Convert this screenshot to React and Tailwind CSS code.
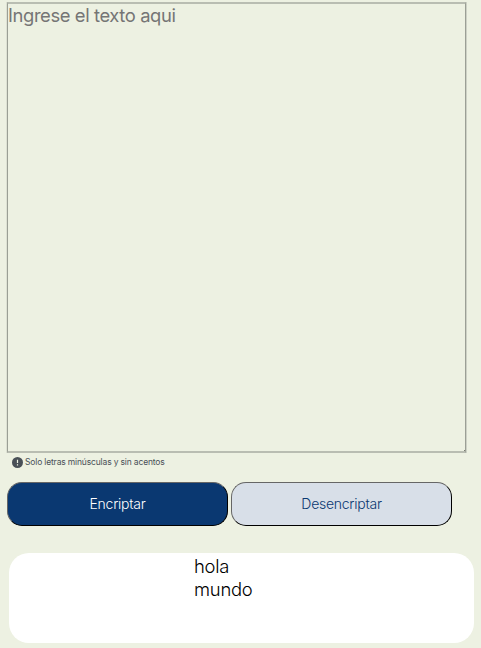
function Hint() {
  return (
    <p className="ml-[11.5px] mt-[3px] flex h-3 items-center gap-[2.5px] text-[8.5px] leading-3 tracking-[-0.16px] text-[#495057]">
      <svg viewBox="0 0 12 12" className="h-[11px] w-[11px] shrink-0">
        <circle cx="6" cy="6" r="6" fill="#495057" />
        <path d="M6 3v3.6M6 8v1.2" stroke="#edf1e2" strokeWidth="1.3" />
      </svg>
      <span>Solo letras minúsculas y sin acentos</span>
    </p>
  );
}

export default function App() {
  return (
    <main className="h-[648px] w-[481px] overflow-hidden bg-[#edf1e2] pt-[2px] font-['Inter','Liberation_Sans',sans-serif]">
      <div className="relative ml-[7px] w-[459px]">
        <textarea
          placeholder="Ingrese el texto aqui"
          className="block h-[451px] w-full resize-none border border-y-2 border-t-[#b9bdb2] border-r-[#9b9f95] border-b-[#b9bdb2] border-l-[#9b9f95] bg-transparent p-0 text-[18.4px] leading-[23px] font-normal tracking-[-0.4px] text-black shadow-[1px_0_0_#cdd1c5,-1px_0_0_#dde1d3] outline-none placeholder:text-[#757575]"
        />
        <span className="absolute right-[1px] bottom-[2px] h-px w-px bg-[#777b72]" />
      </div>
      <Hint />
      <div className="ml-[7px] mt-[14px] flex gap-[3px] text-[14px] leading-5 font-light tracking-[-0.26px]">
        <button className="h-11 w-[221px] rounded-[15px] border-[1.5px] border-t-[#666] border-l-[#666] border-r-black border-b-black bg-[#0a3871] text-white">
          Encriptar
        </button>
        <button className="h-11 w-[221px] rounded-[15px] border-[1.5px] border-t-[#666] border-l-[#666] border-r-black border-b-black bg-[#d8dfe8] text-[#0a3871]">
          Desencriptar
        </button>
      </div>
      <section className="ml-[9px] mt-[27px] h-[90px] w-[464.5px] rounded-[20px] bg-white pl-[185px] pt-[2px] text-[18.4px] leading-[23px] font-[350] tracking-[-0.25px] text-black">
        <p>hola</p>
        <p>mundo</p>
      </section>
    </main>
  );
}
